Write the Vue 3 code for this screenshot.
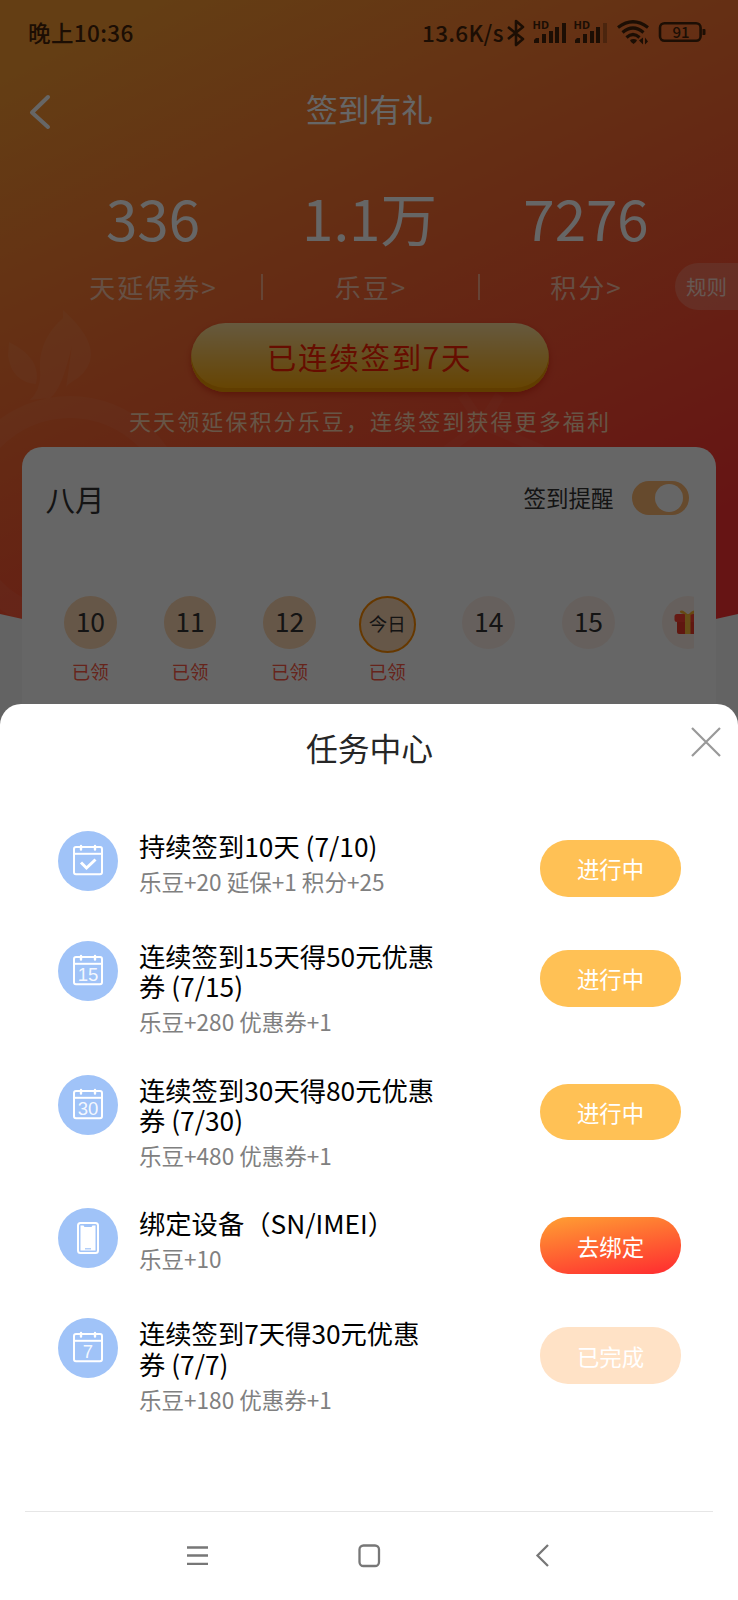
<script setup>
const stats = [
  { value: '336', label: '天延保券>' },
  { value: '1.1万', label: '乐豆>' },
  { value: '7276', label: '积分>' },
]
const days = [
  { text: '10', state: 'done', note: '已领' },
  { text: '11', state: 'done', note: '已领' },
  { text: '12', state: 'done', note: '已领' },
  { text: '今日', state: 'today', note: '已领' },
  { text: '14', state: 'next' },
  { text: '15', state: 'next' },
  { gift: true, state: 'next' },
]
const tasks = [
  { icon: 'check', title: '持续签到10天 (7/10)', reward: '乐豆+20 延保+1 积分+25', action: '进行中', kind: 'doing' },
  { icon: '15', title: '连续签到15天得50元优惠\n券 (7/15)', tall: true, reward: '乐豆+280 优惠券+1', action: '进行中', kind: 'doing' },
  { icon: '30', title: '连续签到30天得80元优惠\n券 (7/30)', tall: true, reward: '乐豆+480 优惠券+1', action: '进行中', kind: 'doing' },
  { icon: 'phone', title: '绑定设备（SN/IMEI）', reward: '乐豆+10', action: '去绑定', kind: 'go' },
  { icon: '7', title: '连续签到7天得30元优惠\n券 (7/7)', tall: true, reward: '乐豆+180 优惠券+1', action: '已完成', kind: 'finished' },
]
</script>

<template>
  <div class="screen">
    <svg class="backdrop" width="738" height="660" viewBox="0 0 738 660">
      <defs>
        <linearGradient id="warm" gradientUnits="userSpaceOnUse" x1="30" y1="60" x2="340" y2="700">
          <stop offset="0" stop-color="#fb9c33" />
          <stop offset="1" stop-color="#ff3333" />
        </linearGradient>
      </defs>
      <path d="M0 0H738V614Q369 700 0 614Z" fill="url(#warm)" />
      <g fill="#fff" opacity=".06">
        <path d="M63 310Q110 352 78 378Q66 385 66 388Q70 360 72 345Q62 390 50 398L30 400Q42 388 40 370Q38 340 63 318Z" />
        <path d="M9 342Q42 358 36 384Q12 382 8 356Z" />
      </g>
      <circle cx="70" cy="514" r="107" fill="none" stroke="#fff" stroke-width="22" opacity=".05" />
      <path d="M462 395L482 424L447 450M500 395L482 424L542 450" fill="none" stroke="#fff" stroke-width="10" opacity=".04" />
    </svg>

    <div class="page">
      <header class="status">
        <span class="clock">晚上10:36</span>
        <span class="speed">13.6K/s</span>
        <svg class="status-icons" width="206" height="34" viewBox="0 0 206 34">
          <g fill="none" stroke="#46240a" stroke-width="2.600">
            <path d="M2 11L17 23L10 29V5L17 11L2 23" stroke-linejoin="round" />
            <rect x="154" y="7.200" width="40.600" height="17.600" rx="4.500" />
          </g>
          <g fill="#46240a">
            <text x="26.500" y="13" class="hd">HD</text>
            <text x="67.500" y="13" class="hd">HD</text>
            <path d="M28 27v-3l2-2h3v5zM36 18h4v9h-4zM43 15h4v12h-4zM49 11h4v16h-4zM56 7h4v20h-4z" />
            <path d="M69 27v-3l2-2h3v5zM77 18h4v9h-4zM84 15h4v12h-4zM90 11h4v16h-4z" />
            <path d="M97 7h4v20h-4z" opacity=".35" />
            <path d="M124 24q3.500-2 7 0l-1 2-2.500 2-2.500-2z" />
            <path d="M137 21.500v7l-4-4zM139 28.500v-7l3 4z" />
            <path d="M196.500 13h2q1 0 1 1v4q0 1-1 1h-2z" />
            <text x="175" y="22" text-anchor="middle" class="battery">91</text>
          </g>
          <g fill="none" stroke="#46240a" stroke-width="3.200">
            <path d="M112 11.500Q127 0 142 11.500" />
            <path d="M116.500 16.500Q127 7.500 137.500 16.500" />
            <path d="M120.500 21.500Q127 15.500 133.500 21.500" />
          </g>
        </svg>
      </header>

      <div class="navbar">
        <svg class="back" width="24" height="38" viewBox="0 0 24 38">
          <path d="M19 4L3 19.500L19 34" fill="none" stroke="#fff" stroke-width="4" stroke-linecap="round" stroke-linejoin="round" />
        </svg>
        <h1>签到有礼</h1>
      </div>

      <section class="stats">
        <div v-for="s in stats" :key="s.label" class="stat">
          <div class="stat-value">{{ s.value }}</div>
          <div class="stat-label">{{ s.label }}</div>
        </div>
        <div class="rules">规则</div>
      </section>

      <button class="streak">已连续签到7天</button>
      <p class="slogan">天天领延保积分乐豆，连续签到获得更多福利</p>

      <section class="card">
        <div class="card-head">
          <span class="month">八月</span>
          <span class="remind">签到提醒</span>
          <span class="toggle"><i></i></span>
        </div>
        <div class="days">
          <div v-for="(d, i) in days" :key="i" class="day" :class="d.state">
            <div class="dot">
              <svg v-if="d.gift" width="28" height="28" viewBox="0 0 28 28">
                <rect x="3" y="11" width="22" height="16" rx="2" fill="#f03a28" />
                <rect x="0.500" y="7" width="27" height="8" rx="2.500" fill="#ff4232" />
                <rect x="11" y="7" width="5.500" height="20" fill="#ffc13a" />
                <path d="M14 8Q5 7 6 4Q9 2 14 8Q19 2 22 4Q23 7 14 8" fill="#ffb52d" />
              </svg>
              <template v-else>{{ d.text }}</template>
            </div>
            <div class="note">{{ d.note }}</div>
          </div>
        </div>
      </section>
    </div>

    <div class="mask"></div>

    <section class="sheet">
      <h2>任务中心</h2>
      <svg class="close" width="32" height="32" viewBox="0 0 32 32">
        <path d="M2 2L30 30M30 2L2 30" fill="none" stroke="#999" stroke-width="2.200" />
      </svg>

      <ul class="tasks">
        <li v-for="t in tasks" :key="t.icon" :class="{ tall: t.tall }">
          <svg class="task-icon" width="60" height="60" viewBox="0 0 60 60">
            <circle cx="30" cy="30" r="30" fill="#a0c3f8" />
            <g v-if="t.icon === 'phone'">
              <rect x="20" y="15" width="20" height="30" rx="2.500" fill="none" stroke="#fff" stroke-width="2" />
              <path d="M22.500 17.500H25.500L26.500 19H33.500L34.500 17.500H37.500V42.500H22.500Z" fill="#fff" />
              <path d="M27 40.800h6" stroke="#a0c3f8" stroke-width="1.200" />
            </g>
            <g v-else fill="none" stroke="#fff" stroke-width="2">
              <rect x="16" y="16" width="28" height="27.300" rx="2" />
              <path d="M16 22.800H44" />
              <path d="M23 15v3.500M37 15v3.500" stroke-width="2.400" stroke-linecap="round" />
              <path v-if="t.icon === 'check'" d="M23 31.500L28.500 37L37.500 28.500" stroke-width="3" />
              <text v-else x="30" y="40" text-anchor="middle" class="date">{{ t.icon }}</text>
            </g>
          </svg>
          <div class="task-body">
            <div class="task-title">{{ t.title }}</div>
            <div class="reward">{{ t.reward }}</div>
          </div>
          <button class="action" :class="t.kind">{{ t.action }}</button>
        </li>
      </ul>

      <div class="rule"></div>
      <nav class="system">
        <svg width="24" height="24" viewBox="0 0 24 24"><path d="M2 3.500h21M2 11.500h21M2 19.800h21" /></svg>
        <svg width="24" height="24" viewBox="0 0 24 24"><rect x="1.500" y="1.500" width="19.500" height="20.500" rx="4" /></svg>
        <svg width="24" height="24" viewBox="0 0 24 24"><path d="M18 1L7.500 11.500L18 22" /></svg>
      </nav>
    </section>
  </div>
</template>

<style>
body {
  margin: 0;
}
</style>

<style scoped>
.screen {
  position: relative;
  width: 738px;
  height: 1600px;
  overflow: hidden;
  background: #f7f7f7;
  font-family: "Noto Sans CJK SC", "Noto Sans", sans-serif;
}
h1, h2, p, ul {
  margin: 0;
  padding: 0;
  font-weight: 400;
}
button {
  border: 0;
  padding: 0;
  font-family: inherit;
}
.backdrop {
  position: absolute;
  left: 0;
  top: 0;
}
.page {
  position: relative;
  display: flex;
  flex-direction: column;
}
.status {
  display: flex;
  align-items: center;
  height: 64px;
  padding-left: 28px;
  color: #46240a;
  font-size: 22.500px;
  font-weight: 500;
}
.clock {
  width: 394px;
  letter-spacing: 0.400px;
}
.speed {
  width: 84px;
  letter-spacing: 0.300px;
}
.status-icons {
  margin-top: 1px;
}
.hd {
  font: 700 11px "Noto Sans", sans-serif;
}
.battery {
  font: 500 15px "Noto Sans CJK SC", sans-serif;
}
.navbar {
  position: relative;
  height: 90px;
  display: flex;
  align-items: center;
  justify-content: center;
  color: #fff;
}
.navbar h1 {
  font-size: 31.800px;
  line-height: 48px;
  margin-top: -3px;
  padding-left: 1px;
}
.back {
  position: absolute;
  left: 29px;
  top: 29px;
}
.stats {
  position: relative;
  display: grid;
  grid-template-columns: repeat(3, 216.500px);
  justify-content: center;
  height: 169px;
  padding-left: 1px;
  color: #fff;
  text-align: center;
}
.stat {
  position: relative;
  padding-top: 22px;
}
.stat-value {
  font-size: 56.500px;
  line-height: 80px;
}
.stat-label {
  margin-top: 11px;
  padding-left: 1px;
  font-size: 26px;
  line-height: 40px;
  letter-spacing: 2px;
  color: #ffd6c0;
  opacity: 0.850;
}
.stat:nth-child(2) .stat-label {
  padding-left: 3px;
}
.stat + .stat::before {
  content: "";
  position: absolute;
  left: 0;
  top: 120px;
  width: 2px;
  height: 26px;
  background: #ffc9ad;
  opacity: 0.700;
}
.rules {
  position: absolute;
  right: 0;
  top: 109px;
  width: 52px;
  height: 47px;
  padding-left: 11px;
  border-radius: 24px 0 0 24px;
  background: rgba(255, 255, 255, 0.200);
  font-size: 20.500px;
  line-height: 46px;
  text-align: left;
  color: #ffd9cc;
}
.streak {
  align-self: center;
  width: 358px;
  height: 69px;
  margin-left: 1px;
  border-radius: 35px;
  background: linear-gradient(#ffdf9c, #ffa800);
  box-shadow: inset 0 -4px 0 #f09800, 0 3px 6px rgba(200, 20, 0, 0.500);
  color: #ff2200;
  font-size: 29.500px;
  line-height: 66px;
  letter-spacing: 1.700px;
  padding-bottom: 3px;
}
.slogan {
  margin-top: 11px;
  height: 44px;
  padding-left: 2px;
  text-align: center;
  font-size: 22px;
  line-height: 34px;
  letter-spacing: 2.100px;
  color: #ffd4b0;
}
.card {
  width: 694px;
  height: 300px;
  margin-left: 22px;
  border-radius: 20px;
  background: #fff;
}
.card-head {
  display: flex;
  align-items: center;
  height: 102px;
  padding: 0 27.500px 0 23.500px;
}
.month {
  flex: 1;
  font-size: 29.500px;
  color: #333;
}
.remind {
  margin-right: 18px;
  padding-bottom: 3px;
  font-size: 22.500px;
  color: #333;
}
.toggle {
  display: flex;
  justify-content: flex-end;
  width: 51px;
  height: 28px;
  padding: 3px;
  border-radius: 17px;
  background: #ffb870;
}
.toggle i {
  width: 28px;
  height: 28px;
  margin-right: 3px;
  border-radius: 50%;
  background: #fff;
}
.days {
  display: flex;
  gap: 46.900px;
  margin: 47px 22px 0 42px;
  overflow: hidden;
}
.day {
  flex: none;
  width: 52.700px;
}
.day.today {
  width: 57px;
  margin: 0 -0.200px 0 -4px;
}
.dot {
  display: flex;
  align-items: center;
  justify-content: center;
  box-sizing: border-box;
  height: 52.700px;
  padding-bottom: 3px;
  border-radius: 50%;
  font-size: 26.500px;
  color: #333;
}
.done .dot {
  background: #ffd9b3;
}
.today .dot {
  height: 57px;
  border: 2px solid #ff8c00;
  background: #ffd9b3;
  font-size: 18.500px;
}
.next .dot {
  background: #fff1e9;
}
.note {
  margin-top: 8px;
  font-size: 18.500px;
  line-height: 28px;
  text-align: center;
  color: #ff5a46;
}
.today .note {
  margin-top: 3.700px;
}
.mask {
  position: absolute;
  inset: 0;
  background: rgba(0, 0, 0, 0.600);
}
.sheet {
  position: absolute;
  left: 0;
  right: 0;
  top: 703.500px;
  bottom: 0;
  border-radius: 21px 21px 0 0;
  background: #fff;
}
.sheet h2 {
  padding: 19px 0 1px 1px;
  font-size: 31.800px;
  line-height: 48px;
  text-align: center;
  color: #262626;
}
.close {
  position: absolute;
  left: 690px;
  top: 22.500px;
}
.tasks {
  margin-top: 59.500px;
  list-style: none;
}
.tasks li {
  display: flex;
  height: 110px;
  padding: 0 57px 0 58px;
}
.tasks li.tall {
  height: 133.600px;
}
.task-icon {
  flex: none;
}
.date {
  font: 18.500px "Liberation Sans", sans-serif;
  fill: #fff;
  fill-opacity: 0.900;
  stroke: none;
}
.task-body {
  flex: 1;
  padding-left: 21px;
}
.task-title {
  font-size: 26.300px;
  line-height: 30.400px;
  color: #000;
  white-space: pre;
}
.reward {
  margin-top: 3.500px;
  font-size: 22.550px;
  line-height: 32px;
  color: #808080;
}
.action {
  width: 141px;
  height: 56.500px;
  margin-top: 9.200px;
  border-radius: 28px;
  font-size: 22.400px;
  color: #fff;
}
.doing {
  background: #ffc155;
}
.go {
  background: linear-gradient(170deg, #ff9a33 5%, #ff3330 92%);
}
.finished {
  background: #ffe2c6;
}
.rule {
  height: 1px;
  margin: 59px 25px 0;
  background: #e6e6e6;
}
.system {
  display: flex;
  justify-content: space-between;
  margin: 32px 184px 0 185px;
}
.system svg {
  fill: none;
  stroke: #777;
  stroke-width: 2.300;
}
</style>
